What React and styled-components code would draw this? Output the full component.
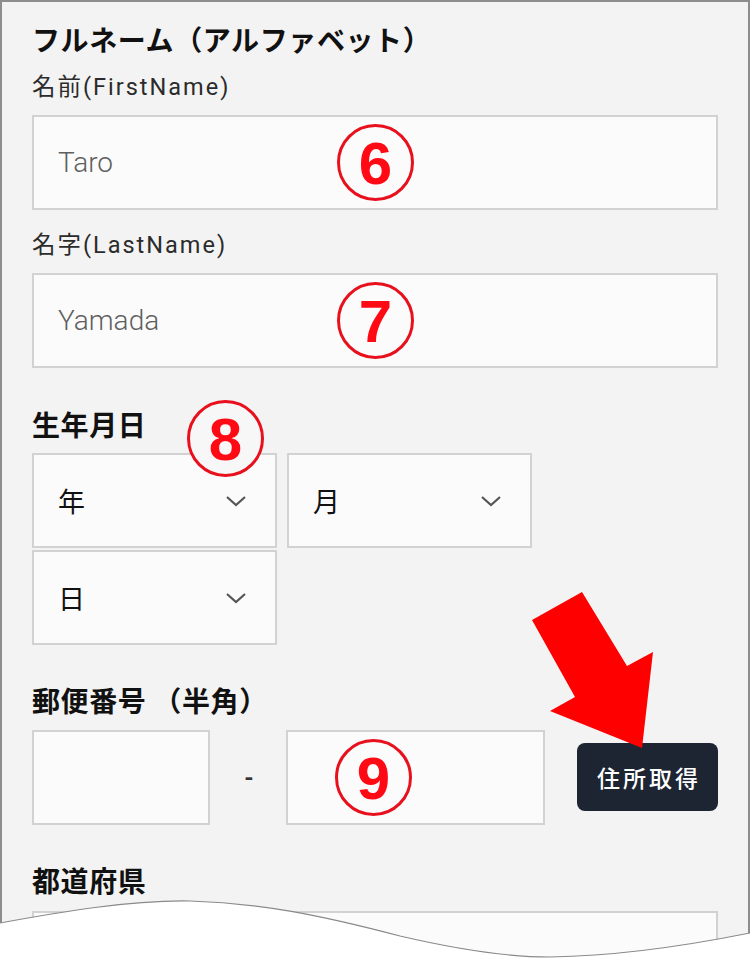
import React from "react";
import styled, { createGlobalStyle } from "styled-components";

const GlobalStyle = createGlobalStyle`
  html, body {
    margin: 0;
    padding: 0;
    background: #ffffff;
  }
  body {
    font-family: Roboto, "Noto Sans CJK JP", sans-serif;
  }
  * {
    box-sizing: border-box;
  }
`;

const Shell = styled.div`
  position: relative;
  width: 750px;
  height: 958px;
  overflow: hidden;
`;

const Frame = styled.div`
  width: 750px;
  height: 958px;
  background: #f3f3f3;
  border: 2px solid #8d8d8d;
  border-bottom: none;
  padding: 21px 30px 0 30px;
  display: flex;
  flex-direction: column;
  & > * {
    flex-shrink: 0;
  }
`;

const Heading = styled.div`
  font-family: "Noto Sans CJK JP", sans-serif;
  font-size: 28px;
  font-weight: 700;
  line-height: 32px;
  letter-spacing: 0.6px;
  color: #111;
  margin-top: ${(p) => p.top || 0}px;
  white-space: pre;
`;

const Label = styled.div`
  font-size: 23.5px;
  line-height: 30px;
  color: #2b2b2b;
  letter-spacing: 2px;
  margin-top: ${(p) => p.top || 0}px;
`;

const Field = styled.div`
  position: relative;
  flex-shrink: 0;
  margin-top: ${(p) => p.top || 0}px;
  width: ${(p) => (p.w ? `${p.w}px` : "100%")};
  height: 95px;
  background: #fbfbfb;
  border: 2px solid #d2d2d2;
  display: flex;
  align-items: center;
  padding-left: 24px;
`;

const Placeholder = styled.span`
  font-family: Roboto, sans-serif;
  font-size: 28px;
  font-weight: 300;
  color: #5f5f5f;
`;

const Badge = styled.div`
  position: absolute;
  left: ${(p) => p.x}px;
  top: ${(p) => p.y}px;
  width: 77px;
  height: 77px;
  border-radius: 50%;
  border: 3px solid #e8101c;
  background: ${(p) => (p.filled ? "#f7f7f7" : "transparent")};
  display: flex;
  align-items: center;
  justify-content: center;
  font-family: "Liberation Sans", Arial, sans-serif;
  font-weight: 700;
  font-size: 60px;
  line-height: 1;
  color: #ff0a14;
  padding-top: 2px;
  z-index: 2;
`;

const DateGroup = styled.div`
  position: relative;
  margin-top: 13px;
  width: 500px;
  display: flex;
  flex-wrap: wrap;
  column-gap: 10px;
  row-gap: 2px;
`;

const Select = styled.div`
  width: 245px;
  height: 95px;
  background: #fbfbfb;
  border: 2px solid #d2d2d2;
  display: flex;
  align-items: center;
  justify-content: space-between;
  padding: 0 28px 0 24px;
  font-family: "Noto Sans CJK JP", sans-serif;
  font-size: 27px;
  color: #111;
`;

const PostalRow = styled.div`
  margin-top: 14px;
  display: flex;
  align-items: center;
`;

const Dash = styled.div`
  width: 76px;
  text-align: center;
  font-size: 24px;
  font-weight: 700;
  color: #333;
  padding-left: 2px;
`;

const FetchButton = styled.button`
  margin-left: 32px;
  margin-bottom: 2px;
  width: 141px;
  height: 68px;
  border: none;
  border-radius: 8px;
  background: #1d2533;
  color: #ffffff;
  font-family: "Noto Sans CJK JP", sans-serif;
  font-size: 23px;
  font-weight: 500;
  letter-spacing: 3px;
  padding: 0 0 0 3px;
`;

const Overlay = styled.svg`
  position: absolute;
  left: 0;
  top: 0;
  pointer-events: none;
  z-index: 5;
`;

function Chevron() {
  return (
    <svg width="22" height="12" viewBox="0 0 22 12">
      <path d="M2 2 L11 10 L20 2" fill="none" stroke="#555" strokeWidth="2.2" />
    </svg>
  );
}

export default function App() {
  return (
    <>
      <GlobalStyle />
      <Shell>
        <Frame>
          <Heading>フルネーム（アルファベット）</Heading>
          <Label top={17}>名前(FirstName)</Label>
          <Field top={13}>
            <Placeholder>Taro</Placeholder>
            <Badge x={303} y={7}>6</Badge>
          </Field>
          <Label top={20}>名字(LastName)</Label>
          <Field top={13}>
            <Placeholder>Yamada</Placeholder>
            <Badge x={303} y={7}>7</Badge>
          </Field>

          <Heading top={40}>生年月日</Heading>
          <DateGroup>
            <Select>
              <span>年</span>
              <Chevron />
            </Select>
            <Select>
              <span>月</span>
              <Chevron />
            </Select>
            <Select>
              <span>日</span>
              <Chevron />
            </Select>
            <Badge x={155} y={-53} filled>8</Badge>
          </DateGroup>

          <Heading top={39}>郵便番号 （半角）</Heading>
          <PostalRow>
            <Field w={178} />
            <Dash>-</Dash>
            <Field w={259}>
              <Badge x={47} y={7}>9</Badge>
            </Field>
            <FetchButton>住所取得</FetchButton>
          </PostalRow>

          <Heading top={39}>都道府県</Heading>
          <Field top={15} />
        </Frame>

        <Overlay width="750" height="958" viewBox="0 0 750 958">
          <polygon
            points="532,620 582,592 627,666 653,652 642,748 550,711 575,697"
            fill="#ff0000"
          />
          <path
            d="M0,923 C60,912 130,900 190,901 C260,903 320,915 400,936 C460,950 510,957 550,957 C620,956 690,945 750,933 L750,958 L0,958 Z"
            fill="#ffffff"
          />
          <path
            d="M0,923 C60,912 130,900 190,901 C260,903 320,915 400,936 C460,950 510,957 550,957 C620,956 690,945 750,933"
            fill="none"
            stroke="#8a8a8a"
            strokeWidth="1.2"
          />
        </Overlay>
      </Shell>
    </>
  );
}
